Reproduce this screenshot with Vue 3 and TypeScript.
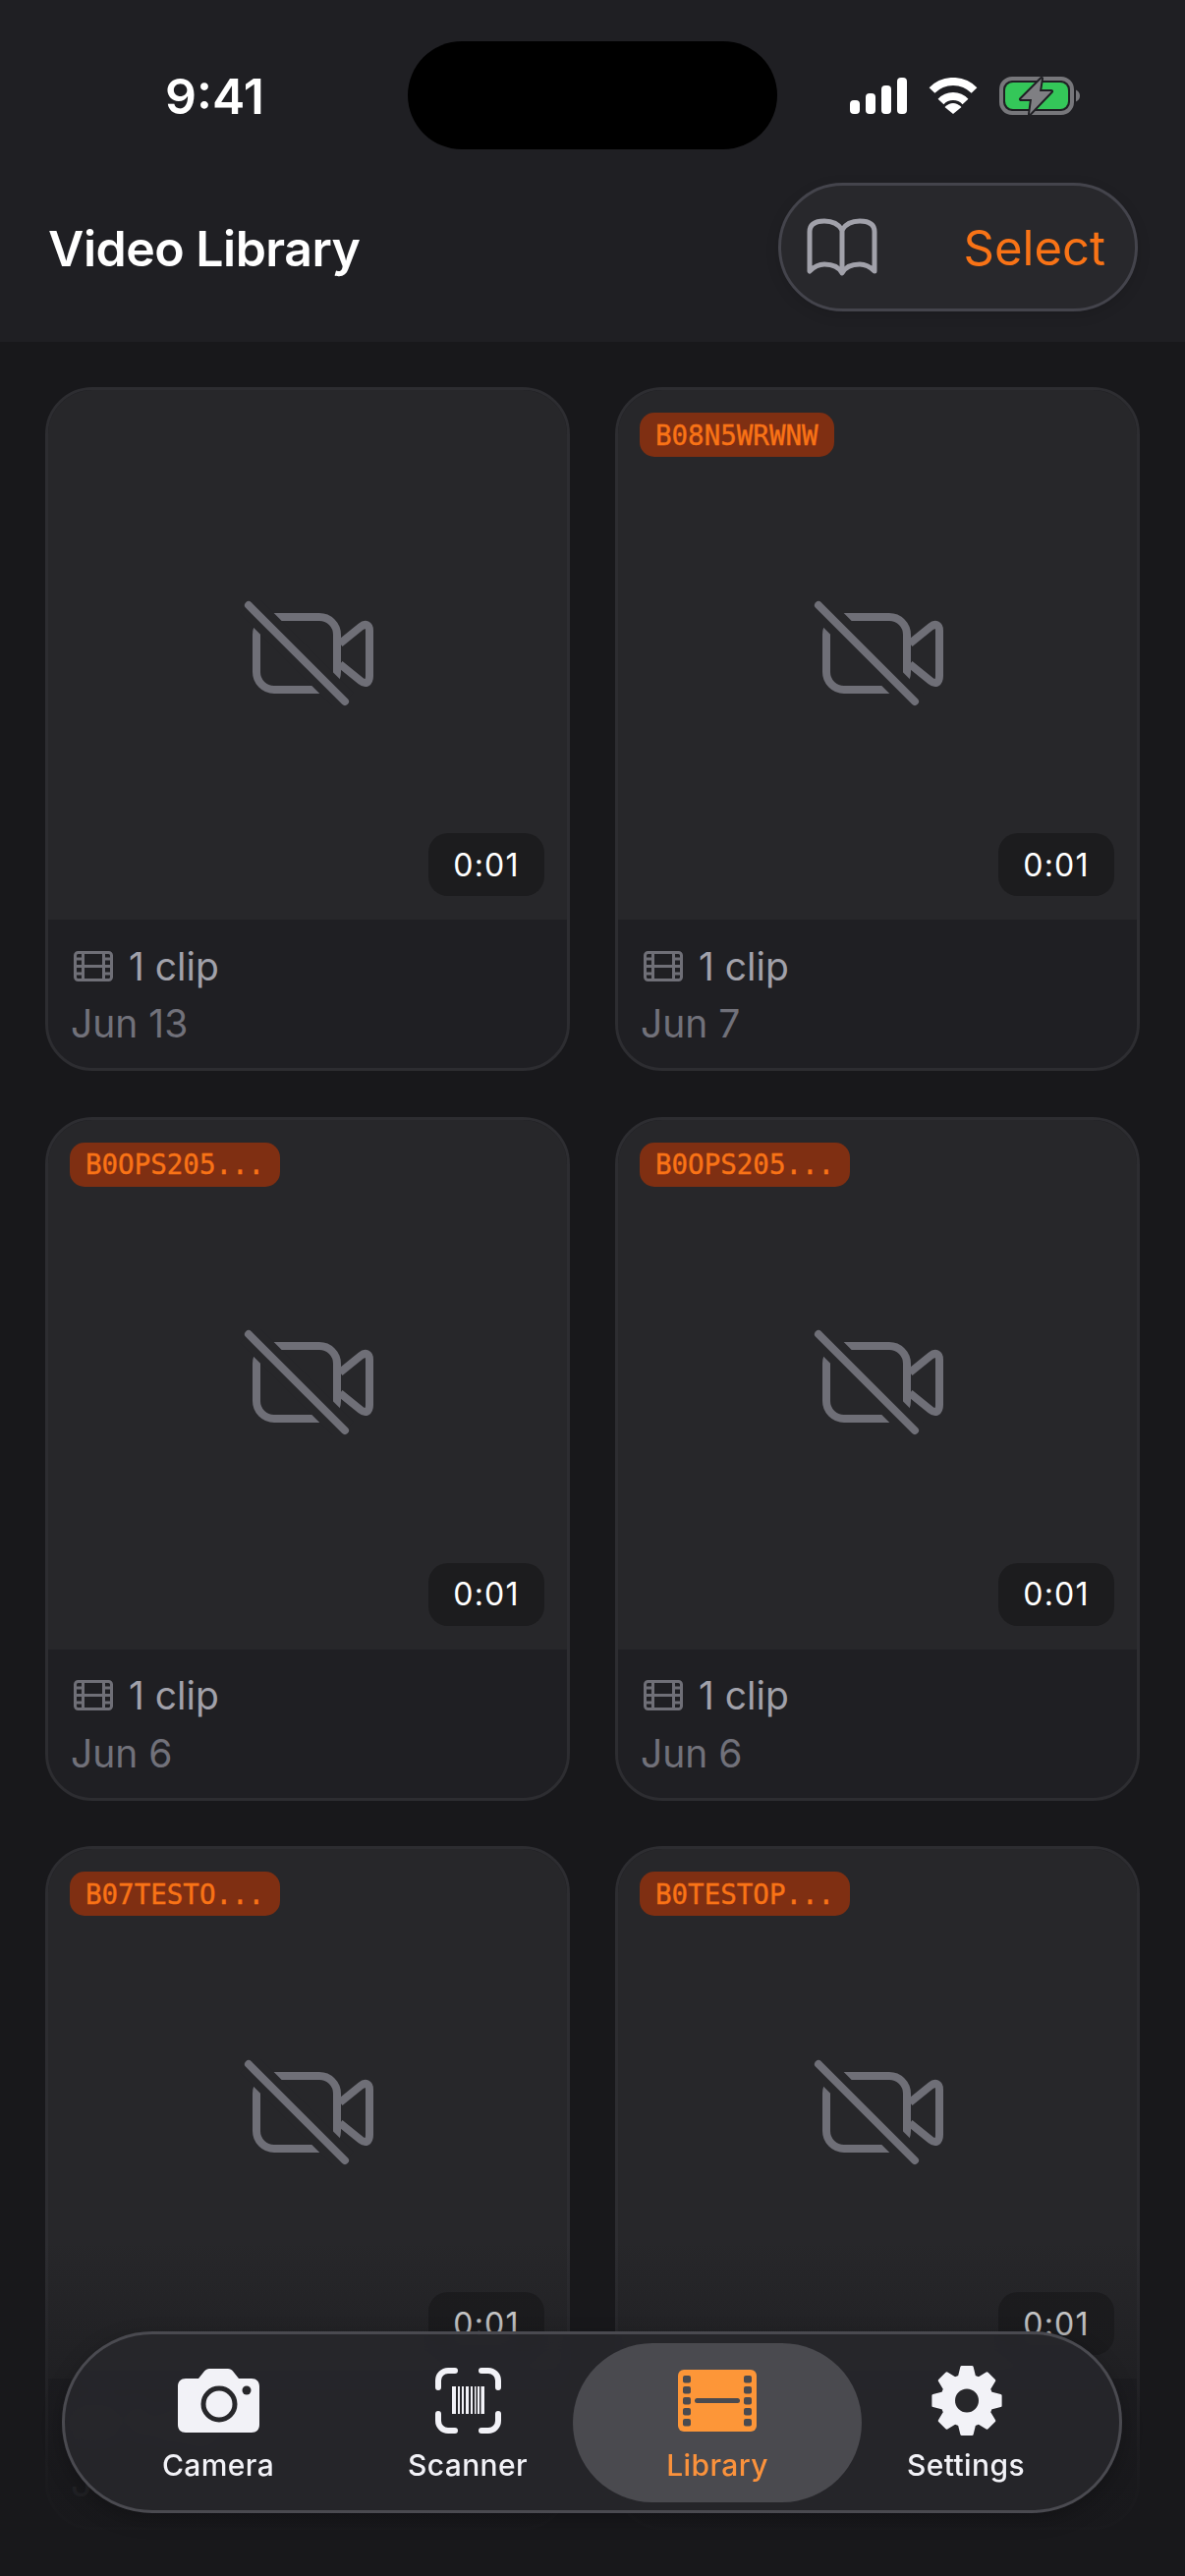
<script setup lang="ts">
import { computed } from 'vue';

interface Clip {
  tag: string;
  date: string;
}

const clips: Clip[] = [
  { tag: '', date: 'Jun 13' },
  { tag: 'B08N5WRWNW', date: 'Jun 7' },
  { tag: 'B0OPS205...', date: 'Jun 6' },
  { tag: 'B0OPS205...', date: 'Jun 6' },
  { tag: 'B07TESTO...', date: 'Jun 5' },
  { tag: 'B0TESTOP...', date: 'Jun 5' },
];

// Bars of the scanner glyph: [x, width]
const barcode: [number, number][] = [
  [17, 4], [23, 2], [27, 2], [31, 3], [36, 2], [40, 1.5], [43, 2], [46.5, 3.5],
];

const holesY = [6, 17, 28, 39, 50];

// Eight-tooth gear outline, corners are rounded by the stroke on the path
const gearPath = computed(() => {
  const pts: string[] = [];
  for (let i = 0; i < 8; i++) {
    const a = (i * Math.PI) / 4 - Math.PI / 2;
    const offsets: [number, number][] = [
      [-0.3, 25.5],
      [-0.15, 34.5],
      [0.15, 34.5],
      [0.3, 25.5],
    ];
    for (const [d, r] of offsets) {
      pts.push(`${(36 + r * Math.cos(a + d)).toFixed(2)} ${(36.5 + r * Math.sin(a + d)).toFixed(2)}`);
    }
  }
  return 'M' + pts.join('L') + 'Z';
});
</script>

<template>
  <div class="screen">
    <header class="top">
      <div class="status">
        <span class="time">9:41</span>
        <div class="island"></div>
        <div class="status-icons">
          <svg width="58" height="37" viewBox="0 0 58 37" fill="#fff">
            <rect x="0" y="23" width="10" height="14" rx="4" />
            <rect x="16" y="16" width="10" height="21" rx="4" />
            <rect x="32" y="8" width="10" height="29" rx="4" />
            <rect x="48" y="0" width="10" height="37" rx="4" />
          </svg>
          <svg width="50" height="37" viewBox="0 0 50 37" fill="none" stroke="#fff" stroke-width="8">
            <path d="M3.5 13A30 30 0 0 1 46.5 13" />
            <path d="M12.5 24.5A17 17 0 0 1 37.5 24.5" />
            <path d="M16.5 30Q25 22 33.5 30L25 37Z" fill="#fff" stroke="none" />
          </svg>
          <svg width="82" height="39" viewBox="0 0 82 39">
            <rect x="2" y="2" width="72" height="35" rx="11" fill="none" stroke="#77777b" stroke-width="4" />
            <rect x="6" y="6" width="64" height="27" rx="8" fill="#34c759" />
            <path d="M78 13.5C81 15 82 17 82 19.5S81 24 78 25.5Z" fill="#77777b" />
            <path
              d="M43 2L22 23H33L31 38L53 15H41Z"
              fill="#7f7f83"
              stroke="#1f1f23"
              stroke-width="4"
              stroke-linejoin="round"
              paint-order="stroke"
            />
          </svg>
        </div>
      </div>
      <div class="toolbar">
        <h1>Video Library</h1>
        <div class="actions">
          <svg width="72" height="60" viewBox="0 0 72 60" fill="none" stroke="#a1a1aa" stroke-width="5" stroke-linejoin="round">
            <path d="M3 54V14C3 6 9 3 18 3C27 3 33 7 36 12C39 7 45 3 54 3C63 3 69 6 69 14V54C64 49 60 47 54 47C46 47 39 50 36 56C33 50 26 47 18 47C12 47 8 49 3 54Z" />
            <path d="M36 12V56" />
          </svg>
          <span class="select">Select</span>
        </div>
      </div>
    </header>

    <main class="grid">
      <article v-for="(clip, i) in clips" :key="i" class="card">
        <div class="thumb">
          <span v-if="clip.tag" class="tag">{{ clip.tag }}</span>
          <svg class="no-video" width="140" height="108" viewBox="244 612 140 108" fill="none" stroke="#6f6f77" stroke-width="8" stroke-linejoin="round">
            <rect x="261" y="629" width="82" height="74" rx="18" />
            <path d="M346 656L367 639C372 635 376 637 376 643V689C376 696 372 698 367 694L346 677" />
            <path d="M253 617L351 715" stroke="#27272a" stroke-width="25" />
            <path d="M253 617L351 715" stroke-linecap="round" />
          </svg>
          <span class="duration">0:01</span>
        </div>
        <div class="info">
          <div class="clips">
            <svg width="40" height="31" viewBox="0 0 40 31" fill="none" stroke="#6f6f77" stroke-width="3">
              <rect x="1.5" y="1.5" width="37" height="28" rx="3" />
              <path d="M9.5 1.5V29.5M30.5 1.5V29.5M9.5 15.5H30.5M1.5 8H9.5M1.5 15.5H9.5M1.5 23H9.5M30.5 8H38.5M30.5 15.5H38.5M30.5 23H38.5" />
            </svg>
            <span>1 clip</span>
          </div>
          <div class="date">{{ clip.date }}</div>
        </div>
      </article>
    </main>

    <div class="fade"></div>

    <nav class="tabs">
      <div class="tab">
        <svg width="83" height="65" viewBox="0 0 83 65">
          <path d="M8 10H21L27 2.5C28.500 1 30 0 32 0H51C53 0 55 1 56 2.500L62 10H75C80 10 83 13 83 18V57C83 62 80 65 75 65H8C3 65 0 62 0 57V18C0 13 3 10 8 10Z" fill="#f2f2f7" />
          <circle cx="42" cy="36" r="16" fill="none" stroke="#27272a" stroke-width="5" />
          <circle cx="70" cy="22" r="4.500" fill="#27272a" />
        </svg>
        <span>Camera</span>
      </div>
      <div class="tab">
        <svg width="67" height="67" viewBox="0 0 67 67" fill="none" stroke="#f2f2f7" stroke-width="6" stroke-linecap="round">
          <path d="M3 20V13A10 10 0 0 1 13 3H20" />
          <path d="M47 3H54A10 10 0 0 1 64 13V20" />
          <path d="M64 47V54A10 10 0 0 1 54 64H47" />
          <path d="M20 64H13A10 10 0 0 1 3 54V47" />
          <rect v-for="[x, w] in barcode" :key="x" :x="x" y="19" :width="w" height="28" fill="#f2f2f7" stroke="none" />
        </svg>
        <span>Scanner</span>
      </div>
      <div class="tab active">
        <svg width="80" height="63" viewBox="0 0 80 63">
          <rect width="80" height="63" rx="6" fill="#fd9638" />
          <g fill="#4a4a4f">
            <template v-for="y in holesY" :key="y">
              <rect x="5" :y="y" width="8" height="7.500" rx="2" />
              <rect x="67" :y="y" width="8" height="7.500" rx="2" />
            </template>
            <rect x="17" y="29" width="46" height="5" rx="2.500" />
          </g>
        </svg>
        <span>Library</span>
      </div>
      <div class="tab">
        <svg width="72" height="73" viewBox="0 0 72 73">
          <path :d="gearPath" fill="#f2f2f7" stroke="#f2f2f7" stroke-width="3" stroke-linejoin="round" />
          <circle cx="36" cy="36.500" r="12" fill="#27272a" />
        </svg>
        <span>Settings</span>
      </div>
    </nav>
  </div>
</template>

<style>
html,
body {
  margin: 0;
  background: #18181b;
}
</style>

<style scoped>
.screen {
  position: relative;
  width: 1206px;
  height: 2622px;
  overflow: hidden;
  background: #18181b;
  font-family: Inter, "Liberation Sans", sans-serif;
}

.top {
  height: 348px;
  box-sizing: border-box;
  padding-top: 42px;
  background: #1f1f23;
}
.status {
  display: grid;
  grid-template-columns: 415px 376px 1fr;
  align-items: center;
}
.time {
  padding: 2px 0 0 22px;
  text-align: center;
  font-size: 50px;
  font-weight: 600;
  color: #fff;
}
.island {
  height: 110px;
  border-radius: 55px;
  background: #000;
}
.status-icons {
  display: flex;
  align-items: center;
  padding-left: 74px;
  gap: 22px;
}

.toolbar {
  display: flex;
  align-items: center;
  justify-content: space-between;
  padding: 34px 48px 0 49px;
}
h1 {
  margin: 2px 0 0;
  font-size: 50px;
  font-weight: 600;
  color: #fff;
  letter-spacing: -0.5px;
}
.actions {
  display: flex;
  align-items: center;
  justify-content: space-between;
  width: 366px;
  height: 131px;
  box-sizing: border-box;
  padding: 0 30px 0 26px;
  border: 3px solid #44444c;
  border-radius: 66px;
  background: #28282c;
  box-shadow: 0 4px 14px rgba(0, 0, 0, 0.12);
}
.select {
  margin-top: 2px;
  font-size: 49px;
  color: #f97316;
}

.grid {
  display: grid;
  grid-template-columns: 534px 534px;
  gap: 46.5px 46px;
  padding: 46px 46px 0;
}
.card {
  height: 696px;
  box-sizing: border-box;
  display: flex;
  flex-direction: column;
  overflow: hidden;
  border: 3px solid #2d2d31;
  border-radius: 48px;
  background: #1f1f23;
}
.thumb {
  position: relative;
  height: 539px;
  flex: none;
  display: flex;
  align-items: center;
  justify-content: center;
  background: #27272a;
}
.tag {
  position: absolute;
  top: 23px;
  left: 22px;
  height: 45px;
  display: flex;
  align-items: center;
  padding: 0 16px;
  border-radius: 15px;
  background: #7f2f12;
  color: #f97316;
  font-family: "DejaVu Sans Mono", "Liberation Mono", monospace;
  font-size: 27.500px;
  -webkit-text-stroke: 0.4px #f97316;
}
.no-video {
  margin: -4px 0 0 1px;
}
.duration {
  position: absolute;
  right: 23px;
  bottom: 24px;
  width: 118px;
  height: 64px;
  display: flex;
  align-items: center;
  justify-content: center;
  border-radius: 20px;
  background: #1c1c1e;
  color: #fff;
  font-size: 32px;
  letter-spacing: 1.2px;
}
.info {
  padding: 24px 23px 0;
  font-size: 39px;
}
.clips {
  display: flex;
  align-items: center;
  gap: 16px;
  color: #a1a1aa;
  height: 46px;
  padding-left: 3px;
}
.date {
  margin-top: 12px;
  color: #71717a;
}

.fade {
  position: absolute;
  left: 0;
  right: 0;
  bottom: 0;
  height: 340px;
  background: linear-gradient(rgba(24, 24, 27, 0), rgba(24, 24, 27, 0.9) 75%, rgba(24, 24, 27, 0.95));
}

/* floating tab bar */
.tabs {
  position: absolute;
  left: 63px;
  top: 2373px;
  width: 1079px;
  height: 185px;
  box-sizing: border-box;
  display: grid;
  grid-template-columns: repeat(4, 254px);
  align-items: center;
  padding: 0 27px 0 29px;
  border: 3px solid #4a4a50;
  border-radius: 92px;
  background: rgba(38, 38, 42, 0.94);
  backdrop-filter: blur(10px);
  box-shadow: 0 6px 20px rgba(0, 0, 0, 0.25);
}
.tab {
  position: relative;
  height: 162px;
  display: flex;
  flex-direction: column;
  align-items: center;
  justify-content: flex-start;
  padding-top: 22px;
  box-sizing: border-box;
}
.tab svg {
  position: relative;
  height: 73px;
  flex: none;
}
.tab span {
  position: relative;
  margin-top: 11px;
  font-size: 30px;
  font-weight: 500;
  letter-spacing: 0.4px;
  color: #f2f2f7;
}
.tab:last-child span {
  margin-right: 2px;
}
.tab.active::before {
  content: "";
  position: absolute;
  inset: 0 -20px;
  border-radius: 81px;
  background: #4a4a4f;
}
.tab.active span {
  color: #fb923c;
}
</style>
